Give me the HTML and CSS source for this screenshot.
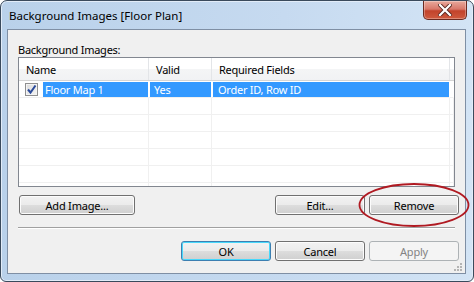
FILE: index.html
```html
<!DOCTYPE html>
<html lang="en">

<head>
  <meta charset="UTF-8">
  <title>Background Images [Floor Plan]</title>
  <link rel="stylesheet" href="styles.css">
</head>

<body>
  <div class="window">
    <!-- title bar -->
    <div class="titlebar">
      <span class="title">Background Images [Floor Plan]</span>
      <div class="close">
        <svg width="14" height="12" viewBox="0 0 14 12">
          <path d="M2 1 L12 11 M12 1 L2 11" stroke="#5a2a22" stroke-width="4" stroke-linecap="square" />
          <path d="M2 1 L12 11 M12 1 L2 11" stroke="#fff" stroke-width="2.2" stroke-linecap="square" />
        </svg>
      </div>
    </div>

    <!-- client area -->
    <div class="client">
      <div class="label">Background Images:</div>

      <div class="list">
        <div class="list-row list-head">
          <div class="cell">Name</div>
          <div class="cell">Valid</div>
          <div class="cell">Required Fields</div>
          <div class="cell"></div>
        </div>
        <div class="list-row selected">
          <div class="cell name-cell">
            <span class="check">
              <svg width="11" height="11" viewBox="0 0 11 11">
                <path d="M2 5.5 L4.5 8.5 L9.5 1.5" fill="none" stroke="#2a4a9a" stroke-width="2" />
              </svg>
            </span>
            <span class="hl">Floor Map 1</span>
          </div>
          <div class="cell valid-cell"><span class="hl">Yes</span></div>
          <div class="cell req-cell"><span class="hl">Order ID, Row ID</span></div>
          <div class="cell"></div>
        </div>
        <div class="list-row"><div class="cell"></div><div class="cell"></div><div class="cell"></div><div class="cell"></div></div>
        <div class="list-row"><div class="cell"></div><div class="cell"></div><div class="cell"></div><div class="cell"></div></div>
        <div class="list-row"><div class="cell"></div><div class="cell"></div><div class="cell"></div><div class="cell"></div></div>
        <div class="list-row"><div class="cell"></div><div class="cell"></div><div class="cell"></div><div class="cell"></div></div>
        <div class="list-row"><div class="cell"></div><div class="cell"></div><div class="cell"></div><div class="cell"></div></div>
        <div class="list-row"><div class="cell"></div><div class="cell"></div><div class="cell"></div><div class="cell"></div></div>
      </div>

      <div class="btn-row">
        <button class="btn btn-wide">Add Image...</button>
        <div class="spacer"></div>
        <button class="btn">Edit...</button>
        <button class="btn">Remove</button>
      </div>

      <div class="separator"></div>

      <div class="btn-row bottom-row">
        <button class="btn btn-default">OK</button>
        <button class="btn">Cancel</button>
        <button class="btn" disabled>Apply</button>
      </div>

      <!-- hand-drawn highlight around Remove -->
      <svg class="circle" width="116" height="48" viewBox="0 0 116 48">
        <ellipse cx="58" cy="24" rx="54.5" ry="21" fill="none" stroke="#b01a22" stroke-width="1.8" />
      </svg>

      <div class="grip">
        <svg width="9" height="9" viewBox="0 0 9 9" fill="#b4b4b4">
          <rect x="6" y="0" width="2" height="2" />
          <rect x="3" y="3" width="2" height="2" />
          <rect x="6" y="3" width="2" height="2" />
          <rect x="0" y="6" width="2" height="2" />
          <rect x="3" y="6" width="2" height="2" />
          <rect x="6" y="6" width="2" height="2" />
        </svg>
      </div>
    </div>
  </div>
</body>

</html>
```

FILE: styles.css
```css
* {
  margin: 0;
  padding: 0;
  box-sizing: border-box;
}

body {
  width: 474px;
  height: 282px;
  background: #fff;
  font-family: "Segoe UI", "Noto Sans", "Liberation Sans", sans-serif;
  font-size: 11px;
  letter-spacing: -0.25px;
  color: #000;
  overflow: hidden;
}

/* window frame */
.window {
  width: 474px;
  height: 282px;
  border: 1px solid #3a4a5c;
  border-radius: 7px 7px 6px 6px;
  background: linear-gradient(90deg, #b9d1ea 0%, #c6daf0 60%, #d3e4f5 100%);
  display: flex;
  flex-direction: column;
  padding: 0 7px 7px 6px;
  box-shadow: inset 0 0 0 1px #e2ecf8;
}

.titlebar {
  height: 28px;
  display: flex;
  align-items: flex-start;
  justify-content: space-between;
}

.title {
  padding: 7px 0 0 2px;
  font-size: 11.5px;
  letter-spacing: 0;
  color: #000;
}

.close {
  width: 44px;
  height: 19px;
  margin-right: -1px;
  border: 1px solid #6b2a20;
  border-top: none;
  border-radius: 0 0 5px 5px;
  background: linear-gradient(180deg, #e8a99c 0%, #d8786a 45%, #c2432b 55%, #cf5a3e 100%);
  display: flex;
  align-items: center;
  justify-content: center;
  box-shadow: inset 0 0 0 1px rgba(255, 255, 255, 0.3);
}

/* client area */
.client {
  flex: 1;
  position: relative;
  background: #f0f0f0;
  border: 1px solid #7f8fa4;
  padding: 10px 6px 0 10px;
  display: flex;
  flex-direction: column;
}

.label {
  height: 17px;
  padding-top: 2px;
  line-height: 15px;
}

/* list view */
.list {
  width: 437px;
  height: 130px;
  border: 1px solid #828790;
  background: #fff;
  overflow: hidden;
}

.list-row {
  display: grid;
  grid-template-columns: 130px 63px 238px 1fr;
  height: 17px;
}

.list-row .cell {
  border-right: 1px solid #f0f0f0;
  border-bottom: 1px solid #f0f0f0;
}

.list-head {
  height: 23px;
  background: linear-gradient(180deg, #fff 0%, #fff 50%, #f4f5f6 52%, #f1f2f4 100%);
  border-bottom: 1px solid #d5d5d5;
}

.list-head .cell {
  padding: 4px 0 0 7px;
  border-bottom: none;
  border-right: 1px solid #e3e5e8;
  line-height: 16px;
}

.list-head .cell:last-child {
  border-right: none;
}

.selected {
  padding-top: 1px;
}

.selected .cell {
  display: flex;
  line-height: 15px;
  border-right: 1px solid #fff;
}

.hl {
  flex: 1;
  background: #3399ff;
  color: #fff;
  padding-left: 2px;
}

.valid-cell .hl {
  margin-left: 1px;
  padding-left: 4px;
}

.req-cell .hl {
  margin-left: 1px;
  padding-left: 5px;
}

.check {
  width: 13px;
  height: 13px;
  margin: 1px 5px 0 6px;
  border: 1px solid #8f8f8f;
  background: linear-gradient(135deg, #dcdcdc, #f4f4f4);
  display: flex;
  align-items: center;
  justify-content: center;
  box-shadow: inset 0 0 0 1px #f4f4f4;
}

/* buttons */
.btn-row {
  display: flex;
  gap: 4px;
  margin-top: 8px;
  padding-left: 1px;
}

.spacer {
  flex: 1;
}

.btn {
  width: 90px;
  height: 20px;
  border: 1px solid #707070;
  border-radius: 3px;
  background: linear-gradient(180deg, #f2f2f2 0%, #ebebeb 50%, #dddddd 51%, #cfcfcf 100%);
  box-shadow: inset 0 0 0 1px #fcfcfc;
  font-family: inherit;
  font-size: 11px;
  letter-spacing: -0.2px;
  color: #000;
}

.btn-wide {
  width: 116px;
}

.btn-default {
  border-color: #3c7fb1;
  box-shadow: inset 0 0 0 1px #48d8fb;
}

.btn:disabled {
  border-color: #adb2b5;
  background: #f4f4f4;
  box-shadow: none;
  color: #838383;
}

.separator {
  height: 2px;
  width: 437px;
  margin-top: 12px;
  border-top: 1px solid #a0a0a0;
  border-bottom: 1px solid #fff;
}

.bottom-row {
  margin-top: 12px;
  justify-content: flex-end;
}

.circle {
  position: absolute;
  left: 348px;
  top: 151px;
}

.grip {
  position: absolute;
  right: 2px;
  bottom: 1px;
  line-height: 0;
}
```
